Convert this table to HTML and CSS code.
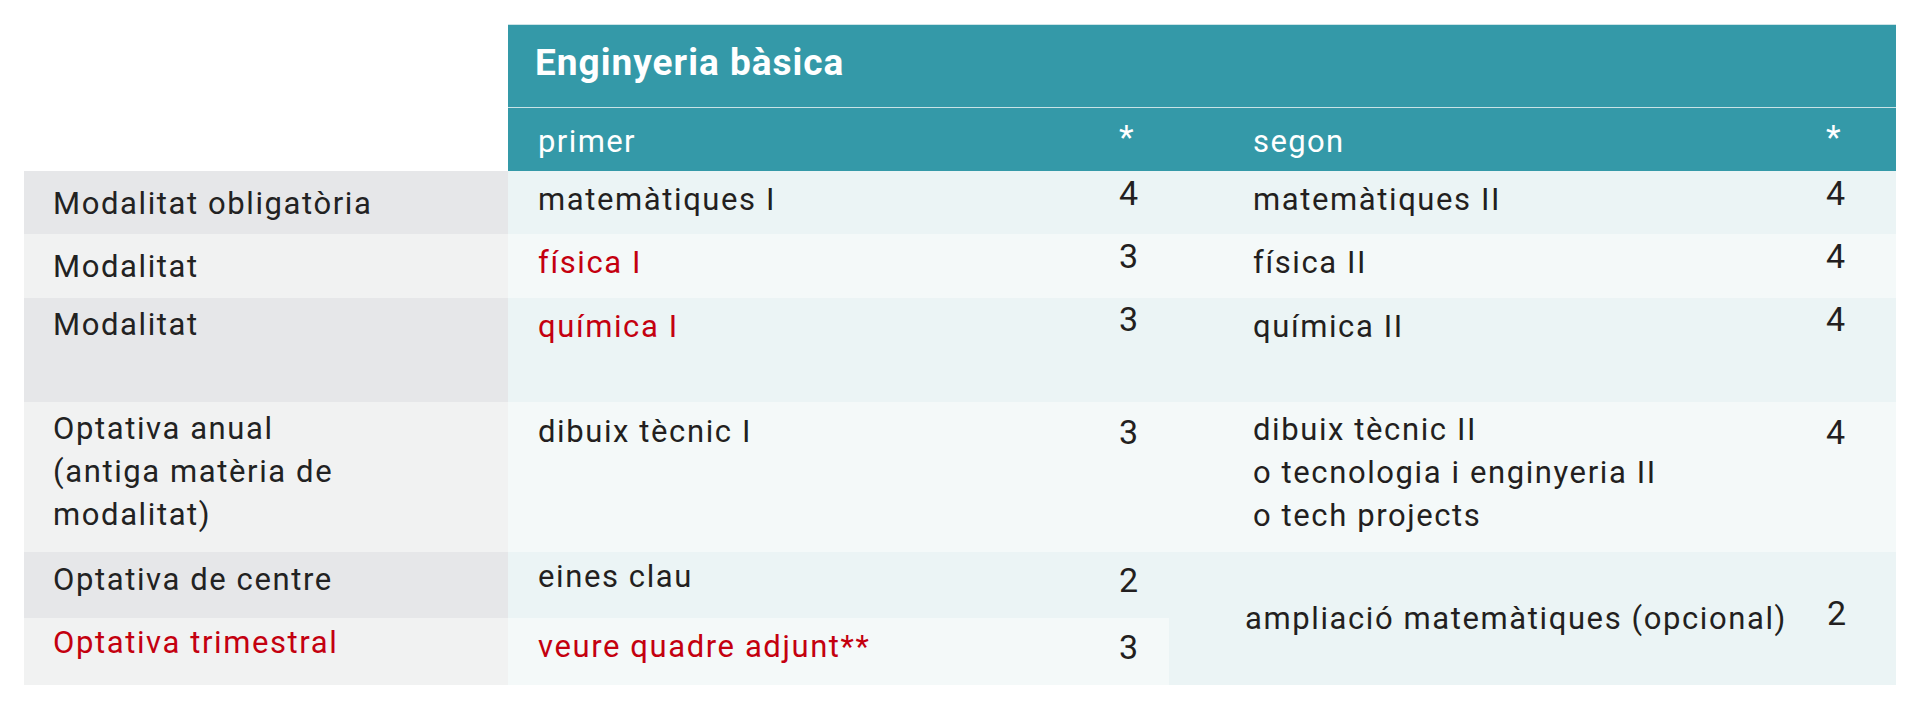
FILE: index.html
```html
<!DOCTYPE html>
<html lang="ca">
<head>
<meta charset="utf-8">
<title>Enginyeria bàsica</title>
<link rel="stylesheet" href="styles.css">
</head>
<body>
<div class="page">
  <div class="grid">
    <div class="blank"></div>
    <div class="head-title">Enginyeria bàsica</div>

    <div class="head-sub txt">primer</div>
    <div class="head-sub num">*</div>
    <div class="head-sub txt seg">segon</div>
    <div class="head-sub num">*</div>

    <div class="lab odd r1">Modalitat obligatòria</div>
    <div class="dat odd txt r1">matemàtiques I</div>
    <div class="dat odd num r1n">4</div>
    <div class="dat odd txt seg r1">matemàtiques II</div>
    <div class="dat odd num r1n">4</div>

    <div class="lab even r2">Modalitat</div>
    <div class="dat even txt red r2">física I</div>
    <div class="dat even num r2n">3</div>
    <div class="dat even txt seg r2">física II</div>
    <div class="dat even num r2n">4</div>

    <div class="lab odd r3">Modalitat</div>
    <div class="dat odd txt red r3">química I</div>
    <div class="dat odd num r3n">3</div>
    <div class="dat odd txt seg r3">química II</div>
    <div class="dat odd num r3n">4</div>

    <div class="lab even r4">Optativa anual<br>(antiga matèria de<br>modalitat)</div>
    <div class="dat even txt r4">dibuix tècnic I</div>
    <div class="dat even num r4n">3</div>
    <div class="dat even txt seg r4s">dibuix tècnic II<br>o tecnologia i enginyeria II<br>o tech projects</div>
    <div class="dat even num r4n">4</div>

    <div class="lab odd r5">Optativa de centre</div>
    <div class="dat odd txt r5d">eines clau</div>
    <div class="dat odd num r5n">2</div>
    <div class="dat odd merged">ampliació matemàtiques (opcional)</div>
    <div class="dat odd merged-num">2</div>

    <div class="lab even red r6">Optativa trimestral</div>
    <div class="dat even txt red r6d">veure quadre adjunt**</div>
    <div class="dat even num r6n">3</div>
  </div>
</div>
</body>
</html>
```

FILE: styles.css
```css
html, body {
  margin: 0;
  padding: 0;
  background: #ffffff;
}

.page {
  padding: 24px 0 0 24px;
  font-family: Roboto, "Liberation Sans", Arial, sans-serif;
  color: #222222;
}

.grid {
  display: grid;
  grid-template-columns: 484px 582px 79px 628px 99px;
  grid-template-rows: 84px 63px 63px 64px 104px 150px 66px 67px;
  width: 1872px;
}

.grid > div {
  box-sizing: border-box;
  font-size: 31px;
  line-height: 43px;
  letter-spacing: 1.6px;
}

.blank {
  grid-row: span 2;
  background: #ffffff;
}

.head-title {
  grid-column: span 4;
  background: #3499a8;
  border-top: 1px solid #cde4e7;
  border-bottom: 1px solid #c9e3e6;
  color: #ffffff;
  font-weight: 700;
  font-size: 37px !important;
  letter-spacing: 1px !important;
  padding: 16px 0 0 27px;
}

.head-sub {
  background: #3499a8;
  color: #ffffff;
}

.head-sub.txt {
  padding-top: 12px;
  letter-spacing: 1.4px !important;
}

.head-sub.num {
  padding-top: 8px;
}

.txt {
  padding-left: 30px;
}

.txt.seg {
  padding-left: 84px;
}

.num {
  padding-left: 29px;
  font-size: 34px !important;
  letter-spacing: 0 !important;
}

.lab {
  padding-left: 29px;
  color: #222222;
}

.lab.odd { background: #e6e7e9; }
.lab.even { background: #f1f2f2; }
.dat.odd { background: #ebf4f5; }
.dat.even { background: #f4f9f9; }

.dat { color: #231f20; }

.red { color: #c4000f !important; }

/* vertical offsets per row */
.lab.r1 { padding-top: 11px; }
.lab.r2 { padding-top: 11px; }
.lab.r3 { padding-top: 5px; }
.lab.r4 { padding-top: 5px; }
.lab.r5 { padding-top: 6px; }
.lab.r6 { padding-top: 3px; }

.dat.r1 { padding-top: 7px; }
.dat.r2 { padding-top: 7px; }
.dat.r3 { padding-top: 7px; }
.dat.r4 { padding-top: 8px; }
.dat.r4s { padding-top: 6px; }
.dat.r5d { padding-top: 3px; }
.dat.r6d { padding-top: 7px; }

.num.r1n { padding-top: 1px; }
.num.r2n { padding-top: 1px; }
.num.r3n { padding-top: 0; }
.num.r4n { padding-top: 9px; }
.num.r5n { padding-top: 7px; }
.num.r6n { padding-top: 8px; }

.merged {
  grid-row: span 2;
  display: flex;
  align-items: center;
  padding-left: 76px;
}

.merged-num {
  grid-row: span 2;
  display: flex;
  align-items: center;
  padding: 0 0 10px 30px;
  font-size: 34px !important;
  letter-spacing: 0 !important;
}
```
